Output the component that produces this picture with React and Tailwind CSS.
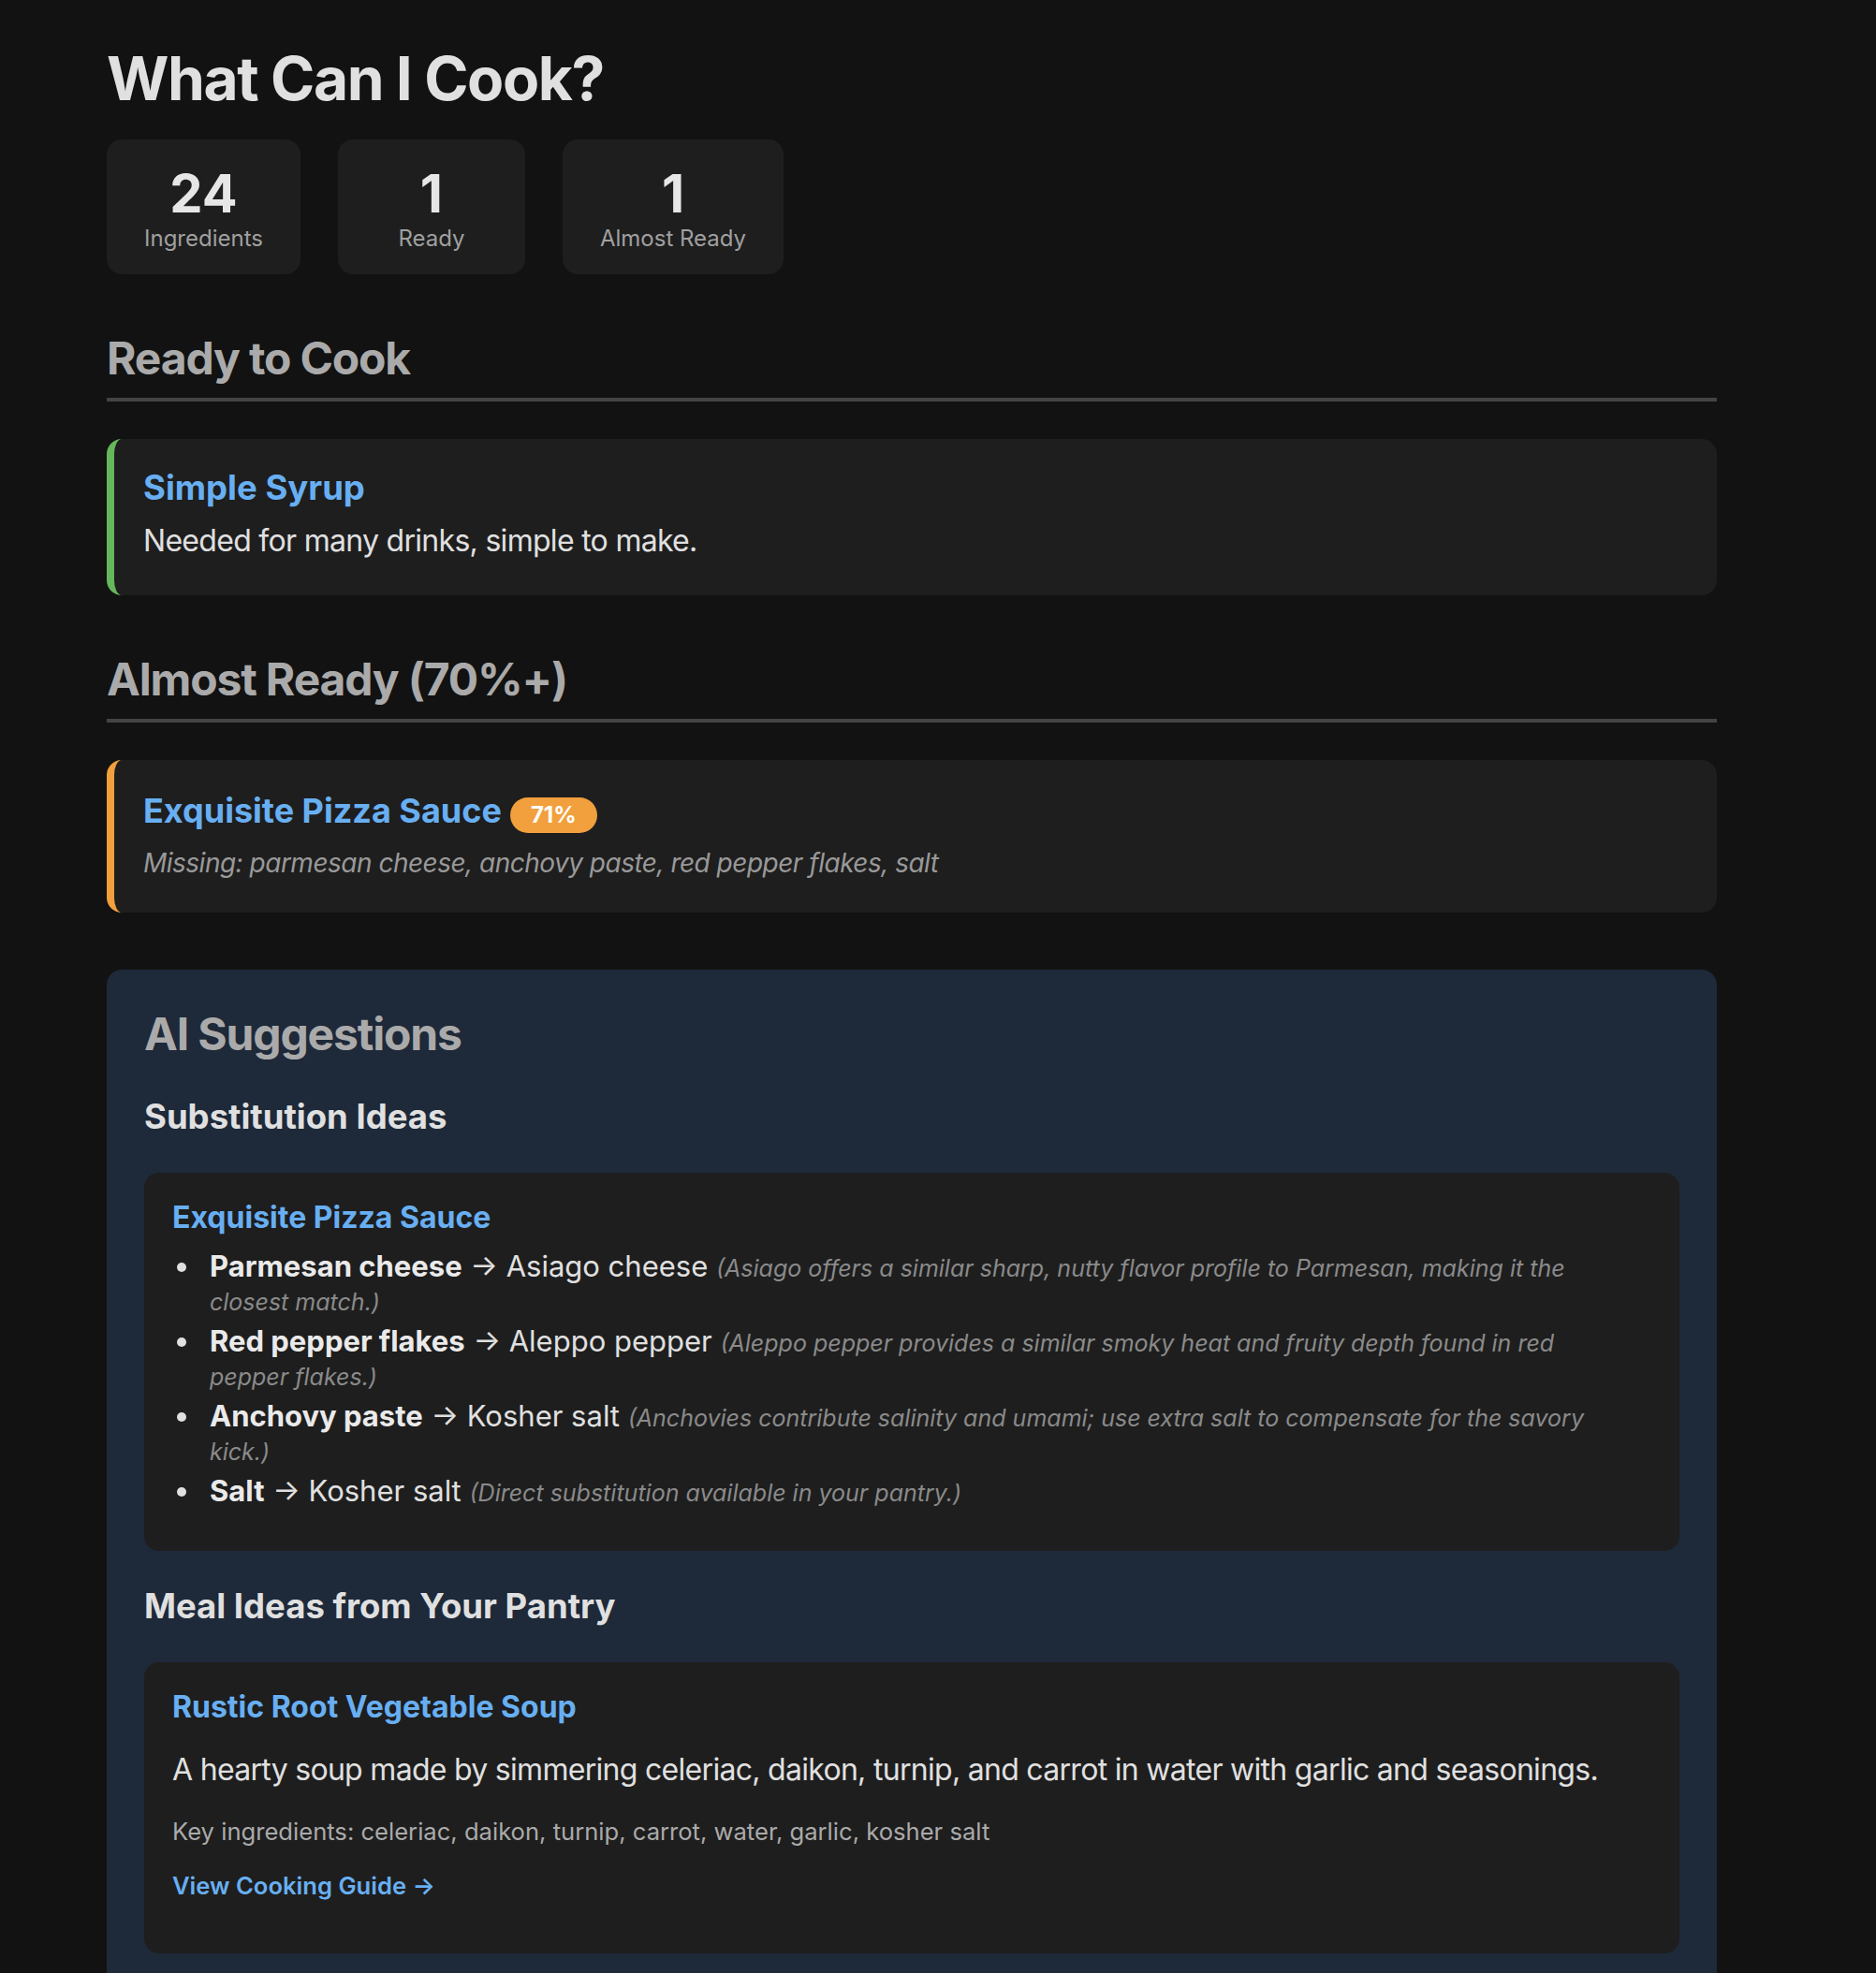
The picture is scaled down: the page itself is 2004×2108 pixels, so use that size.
import React from "react";

const stats = [
  { n: "24", label: "Ingredients" },
  { n: "1", label: "Ready" },
  { n: "1", label: "Almost Ready" },
];

const subs = [
  {
    from: "Parmesan cheese",
    to: "Asiago cheese",
    note: "(Asiago offers a similar sharp, nutty flavor profile to Parmesan, making it the closest match.)",
  },
  {
    from: "Red pepper flakes",
    to: "Aleppo pepper",
    note: "(Aleppo pepper provides a similar smoky heat and fruity depth found in red pepper flakes.)",
  },
  {
    from: "Anchovy paste",
    to: "Kosher salt",
    note: "(Anchovies contribute salinity and umami; use extra salt to compensate for the savory kick.)",
  },
  {
    from: "Salt",
    to: "Kosher salt",
    note: "(Direct substitution available in your pantry.)",
  },
];

export default function App() {
  return (
    <div className="min-h-screen bg-[#121212] font-[Inter,sans-serif] text-[#e0e0e0]">
      <div className="ml-[114px] w-[1720px] pt-[45px] pb-[60px]">
        <h1 className="text-[64px] font-bold leading-[77px] tracking-[-0.022em] text-[#e0e0e0]">
          What Can I Cook?
        </h1>

        <div className="mt-[27px] flex gap-10">
          {stats.map((s) => (
            <div
              key={s.label}
              className="min-w-[200px] rounded-2xl bg-[#1e1e1e] px-10 py-[25px] text-center"
            >
              <div className="text-[56px] font-bold leading-[67px] text-[#e6e6e6]">{s.n}</div>
              <div className="text-[24px] leading-[27px] text-[#a0a0a0]">{s.label}</div>
            </div>
          ))}
        </div>

        <h2 className="mt-[61px] border-b-4 border-[#444444] pb-[13px] text-[48px] font-bold leading-[58px] tracking-[-0.024em] text-[#aaaaaa]">
          Ready to Cook
        </h2>

        <div className="mt-10 rounded-2xl border-l-8 border-[#66b65c] bg-[#1e1e1e] pl-[31px] pr-[30px] pt-[30px] pb-[33px]">
          <h3 className="text-[36.5px] font-bold leading-[44px] text-[#68aff2]">Simple Syrup</h3>
          <p className="mt-[9px] text-[32px] leading-[51px] tracking-[-0.022em] text-[#e0e0e0]">
            Needed for many drinks, simple to make.
          </p>
        </div>

        <h2 className="mt-[61px] border-b-4 border-[#444444] pb-[13px] text-[48px] font-bold leading-[58px] tracking-[-0.024em] text-[#aaaaaa]">
          Almost Ready (70%+)
        </h2>

        <div className="mt-10 rounded-2xl border-l-8 border-[#f2a03d] bg-[#1e1e1e] pl-[31px] pr-[30px] pt-[32px] pb-[31px]">
          <h3 className="text-[36px] font-bold leading-[44px] text-[#68aff2]">
            Exquisite Pizza Sauce
            <span className="ml-[9px] inline-block rounded-full bg-[#f2a03d] px-[22px] py-[4px] text-[24px] font-bold leading-[30px] text-white">
              71%
            </span>
          </h3>
          <p className="mt-[10px] text-[28px] italic leading-[44px] tracking-[-0.018em] text-[#999999]">
            Missing: parmesan cheese, anchovy paste, red pepper flakes, salt
          </p>
        </div>

        <div className="mt-[61px] rounded-2xl bg-[#1e2939] px-10 pt-10 pb-10">
          <h2 className="text-[48px] font-bold leading-[58px] tracking-[-0.024em] text-[#aaaaaa]">AI Suggestions</h2>

          <h3 className="mt-[37px] text-[36.5px] font-bold leading-[44px] text-[#e0e0e0]">Substitution Ideas</h3>

          <div className="mt-[38px] rounded-2xl bg-[#1e1e1e] pl-[30px] pr-[54px] pt-[30px] pb-[46px]">
            <h4 className="text-[32px] font-bold leading-[36px] text-[#68aff2]">Exquisite Pizza Sauce</h4>
            <ul className="mt-[16px]">
              {subs.map((s, i) => (
                <li
                  key={s.from}
                  className={
                    i === subs.length - 1
                      ? "flex text-[31px] leading-[36px] text-[#e0e0e0]"
                      : "mb-2 flex text-[31px] leading-[36px] text-[#e0e0e0]"
                  }
                >
                  <span className="ml-[5px] mr-[25px] mt-[14px] h-[10px] w-[10px] shrink-0 rounded-full bg-[#e0e0e0]" />
                  <div>
                    <strong className="font-bold text-[#eaeaea]">{s.from}</strong> → {s.to}{" "}
                    <em className="text-[25px] italic leading-[20px] text-[#8a8a8a]">{s.note}</em>
                  </div>
                </li>
              ))}
            </ul>
          </div>

          <h3 className="mt-[37px] text-[36.5px] font-bold leading-[44px] text-[#e0e0e0]">
            Meal Ideas from Your Pantry
          </h3>

          <div className="mt-[38px] rounded-2xl bg-[#1e1e1e] px-[30px] pt-[30px] pb-[53px]">
            <h4 className="text-[32px] font-bold leading-[36px] text-[#68aff2]">Rustic Root Vegetable Soup</h4>
            <p className="mt-[25px] text-[32px] leading-[48px] tracking-[-0.022em] text-[#e0e0e0]">
              A hearty soup made by simmering celeriac, daikon, turnip, and carrot in water with garlic and seasonings.
            </p>
            <p className="mt-[23px] text-[25.6px] leading-[38px] text-[#aaaaaa]">
              Key ingredients: celeriac, daikon, turnip, carrot, water, garlic, kosher salt
            </p>
            <a className="mt-[20px] block text-[25.6px] font-semibold leading-[38px] text-[#68aff2]">
              View Cooking Guide →
            </a>
          </div>
        </div>
      </div>
    </div>
  );
}
